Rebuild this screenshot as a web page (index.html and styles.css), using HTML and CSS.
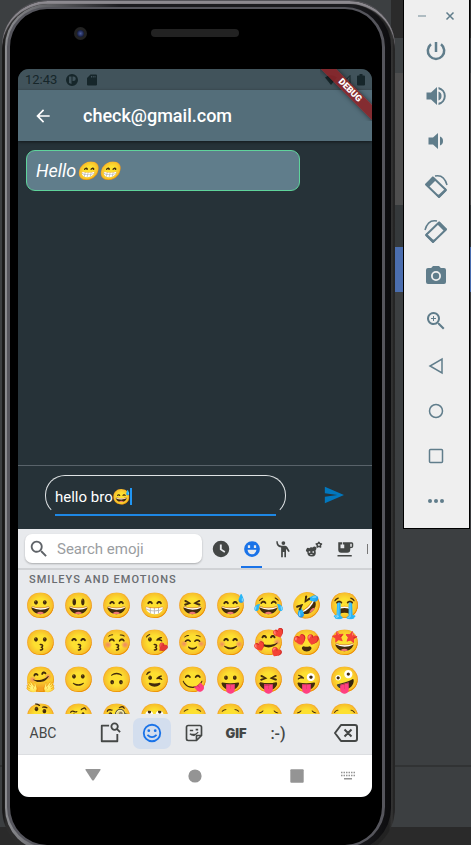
FILE: index.html
```
<!DOCTYPE html>
<html lang="en">
<head>
<meta charset="utf-8">
<meta name="viewport" content="width=device-width, initial-scale=1">
<title>Chat</title>
<link rel="stylesheet" href="styles.css">
</head>
<body>
<main class="desk">
  <div class="phone">
    <div class="rim">
      <div class="bezel">
        <div class="bezel-top"><span class="camera"></span><span class="speaker"></span></div>
        <div class="screen">
          <div class="statusbar">
            <span class="clock">12:43</span>
            <svg class="i12" viewBox="0 0 24 24"><path fill-rule="evenodd" d="M12 0a12 12 0 1 1 0 24 12 12 0 0 1 0-24zM6 5v13l5 2V5zm7 0v9h2a4.500 4.500 0 0 0 0-9z"/></svg>
            <svg class="i12" viewBox="0 0 24 24"><path fill-rule="evenodd" d="M9 1L2 8v13q0 2 2 2h16q2 0 2-2V3q0-2-2-2zm1 3v3h2V4zm3.500 0v3h2V4zM17 4v3h2V4z"/></svg>
            <span class="grow"></span>
            <div class="signals">
              <svg class="i12" viewBox="0 0 24 24"><path d="M0 7q12-9 24 0L12 22z"/></svg>
              <svg class="i12" viewBox="0 0 24 24"><path class="line" d="M20 3v17H4z"/></svg>
              <svg class="i12" viewBox="0 0 24 24"><path d="M9 0h6v3h3q2 0 2 2v16q0 2-2 2H6q-2 0-2-2V5q0-2 2-2h3z"/></svg>
            </div>
          </div>
          <header class="appbar">
            <button class="plain back" aria-label="Back"><svg class="i20" viewBox="0 0 24 24"><path d="M20 11H7.830l5.590-5.590L12 4l-8 8 8 8 1.410-1.410L7.830 13H20z"/></svg></button>
            <h1>check@gmail.com</h1>
          </header>
          <section class="messages"><p class="bubble">Hello😁😁</p></section>
          <form class="composer">
            <div class="field"><label class="entry"><input class="message" size="8" aria-label="Message" value="hello bro😅"><span class="caret"></span></label></div>
            <button type="button" class="plain send" aria-label="Send"><svg class="i20" viewBox="0 0 24 24"><path d="M1 22l23-10L1 2v8l15 2-15 2z"/></svg></button>
          </form>
          <section class="keyboard">
            <div class="searchrow">
              <label class="search">
                <svg class="i22" viewBox="0 0 24 24"><path d="M15.500 14h-.790l-.280-.270A6.500 6.500 0 1 0 13.730 14.430l.270.280v.790l5 5L20.500 19zm-6 0a4.500 4.500 0 1 1 0-9 4.500 4.500 0 0 1 0 9z"/></svg>
                <input placeholder="Search emoji" aria-label="Search emoji">
              </label>
              <nav class="cats">
                <button class="plain" aria-label="Recent"><svg class="i18" viewBox="0 0 24 24"><path fill-rule="evenodd" d="M12 1a11 11 0 1 1 0 22 11 11 0 0 1 0-22zM10.500 6v7l6 4 1.200-2-4.700-3V6z"/></svg></button>
                <button class="plain on" aria-label="Smileys"><svg class="i18" viewBox="0 0 24 24"><path fill-rule="evenodd" d="M12 1.500a10.500 10.500 0 1 1 0 21 10.500 10.500 0 0 1 0-21zM6.500 7v3.500h3V7zm8 0v3.500h3V7zM6 13q1 6 6 6t6-6z"/></svg></button>
                <button class="plain" aria-label="People"><svg class="i18" viewBox="0 0 24 24"><circle cx="12.500" cy="4" r="2.500"/><path d="M3 1.500h2q0 5.500 5 6h5q2 0 3 2l3 5.500-1.700 1-3.300-4.500V23h-2.200v-7h-2v7H9.500V10Q3 9 3 1.500z"/></svg></button>
                <button class="plain" aria-label="Animals and nature"><svg class="i18" viewBox="0 0 24 24"><path fill-rule="evenodd" d="M2 12q1-3 4-1 1-2 4-1 3-3 5 0 1 2-1 4 2 8-5 8-6 0-6-6-3-1-1-4zm3 3v2h2v-2zm5 0v2h2v-2zM7 19v1h3v-1z"/><path class="line" d="M18.500 3l1.200 1.800 2.300.400-1.500 1.800.300 2.500-2.300-1-2.300 1 .300-2.500L15 5.200l2.300-.400z"/></svg></button>
                <button class="plain" aria-label="Food and drink"><svg class="i18" viewBox="0 0 24 24"><path fill-rule="evenodd" d="M3 3h18q2 0 2 2v3q0 3-4 3v2q0 4-4 4H7q-4 0-4-4zm5 0v3H6v5h5V6H9V3zm11 2v4h2V5zM2 20h19v2H2z"/></svg></button>
                <span class="more-cats"></span>
              </nav>
            </div>
            <h2>SMILEYS AND EMOTIONS</h2>
            <div class="emojis">
              <span>😀</span><span>😃</span><span>😄</span><span>😁</span><span>😆</span><span>😅</span><span>😂</span><span>🤣</span><span>😭</span>
              <span>😗</span><span>😙</span><span>😚</span><span>😘</span><span>☺️</span><span>😊</span><span>🥰</span><span>😍</span><span>🤩</span>
              <span>🤗</span><span>🙂</span><span>🙃</span><span>😉</span><span>😋</span><span>😛</span><span>😝</span><span>😜</span><span>🤪</span>
              <span>🤔</span><span>🤨</span><span>🧐</span><span>🙄</span><span>😌</span><span>😌</span><span>😔</span><span>😔</span><span>😪</span>
            </div>
            <div class="modes">
              <button class="plain abc">ABC</button>
              <button class="plain" aria-label="Search media"><svg class="i22" viewBox="0 0 24 24"><path class="line" d="M11 4H3v17h17v-8"/><circle class="line" cx="17" cy="5" r="3.500"/><path class="line" d="M19.500 7.500L23 11"/></svg></button>
              <button class="plain chosen" aria-label="Emoji"><svg class="i22" viewBox="0 0 24 24"><circle class="line" cx="12" cy="12" r="9"/><path class="line" d="M7 14q5 5 10 0"/><circle cx="8.500" cy="9.500" r="1.500"/><circle cx="15.500" cy="9.500" r="1.500"/></svg></button>
              <button class="plain" aria-label="Stickers"><svg class="i20" viewBox="0 0 24 24"><path class="line" d="M5 3h14q2 0 2 2v10l-6 6H5q-2 0-2-2V5q0-2 2-2zM21 15h-6v6"/><path class="thin" d="M7 13q5 4 10-2"/><path d="M7 8h4v2H7zM14 7h3v2h-3zM8 13h7l-3 3z"/></svg></button>
              <button class="plain gif">GIF</button>
              <button class="plain kaomoji">:-)</button>
              <button class="plain" aria-label="Delete"><svg class="i24" viewBox="0 0 24 24"><path class="line" d="M7 4h14q2 0 2 2v12q0 2-2 2H7L1 12zM10.500 8.500l7 7m0-7l-7 7"/></svg></button>
            </div>
          </section>
          <nav class="sysnav">
            <button class="plain" aria-label="Hide keyboard"><svg class="i18" viewBox="0 0 18 18"><path d="M2 2h14q1 0 .500 1L10 13q-1 1-2 0L1.500 3Q1 2 2 2z"/></svg></button>
            <button class="plain" aria-label="Home"><svg class="i18" viewBox="0 0 18 18"><circle cx="9" cy="9" r="6.600"/></svg></button>
            <button class="plain" aria-label="Overview"><svg class="i18" viewBox="0 0 18 18"><rect x="2.300" y="2.300" width="13.400" height="13.400" rx="1"/></svg></button>
            <button class="plain" aria-label="Choose keyboard"><svg class="i18" viewBox="0 0 18 18"><path class="keys" d="M2 5.500h15M2 8.500h15"/><path d="M5 11h8v1.500H5z"/></svg></button>
          </nav>
          <div class="ribbon-box"><span class="ribbon">DEBUG</span></div>
        </div>
      </div>
    </div>
  </div>
  <aside class="tools">
    <div class="window">
      <button class="plain" aria-label="Minimize"><svg class="i12" viewBox="0 0 12 12"><path class="thin faint" d="M2 6h8"/></svg></button>
      <button class="plain" aria-label="Close"><svg class="i12" viewBox="0 0 12 12"><path class="thin" d="M2.500 2.500l7 7m0-7l-7 7"/></svg></button>
    </div>
    <button class="plain" aria-label="Power"><svg class="i24" viewBox="0 0 24 24"><path class="bold" d="M12 3v10M7 5.200a8.200 8.200 0 1 0 10 0"/></svg></button>
    <button class="plain" aria-label="Volume up"><svg class="i24" viewBox="0 0 24 24"><path d="M2.500 8.500v7h4.500l6 5.500V3L7 8.500zM17.500 12A4.500 4.500 0 0 0 14.500 7.500v9A4.500 4.500 0 0 0 17.500 12zM14.500 3v2.200a7 7 0 0 1 0 13.600V21a9.200 9.200 0 0 0 0-18z"/></svg></button>
    <button class="plain" aria-label="Volume down"><svg class="i24" viewBox="0 0 24 24"><path d="M19 12A4.500 4.500 0 0 0 16 7.500v9A4.480 4.480 0 0 0 19 12zM4.500 8.500v7H9l5 4.500V4L9 8.500z"/></svg></button>
    <button class="plain" aria-label="Rotate left"><svg class="i24" viewBox="0 0 24 24"><g class="thick"><path d="M9 3.500L22 16l-7 7L2 10.500z"/><path class="thin" d="M11 2q9-2 12 9"/></g><path d="M8.500 2.500L12 6l-7 7-3-2zM22 14v3l-7 7-3-3 3-.500z"/></svg></button>
    <button class="plain" aria-label="Rotate right"><svg class="i24" viewBox="0 0 24 24"><g class="thick" transform="matrix(-1 0 0 1 24 0)"><path d="M9 3.500L22 16l-7 7L2 10.500z"/><path class="thin" d="M11 2q9-2 12 9"/></g><path d="M15.500 2.500L13 5l7 7 3-2zM2 14v3l7 7 3-3-3-.500z"/></svg></button>
    <button class="plain" aria-label="Screenshot"><svg class="i24" viewBox="0 0 24 24"><circle cx="12" cy="12" r="3.200"/><path d="M9 2L7.170 4H4a2 2 0 0 0-2 2v12a2 2 0 0 0 2 2h16a2 2 0 0 0 2-2V6a2 2 0 0 0-2-2h-3.170L15 2zm3 15a5 5 0 1 1 0-10 5 5 0 0 1 0 10z"/></svg></button>
    <button class="plain" aria-label="Zoom"><svg class="i24" viewBox="0 0 24 24"><path d="M15.500 14h-.790l-.280-.270A6.500 6.500 0 1 0 13.730 14.430l.270.280v.790l5 5L20.500 19zm-6 0a4.500 4.500 0 1 1 0-9 4.500 4.500 0 0 1 0 9zM9 7h1v2h2v1h-2v2H9v-2H7V9h2z"/></svg></button>
    <button class="plain" aria-label="Back key"><svg class="i24" viewBox="0 0 24 24"><path class="thin" d="M18 5v14L6 12z"/></svg></button>
    <button class="plain" aria-label="Home key"><svg class="i24" viewBox="0 0 24 24"><circle class="thin" cx="12" cy="12" r="6.500"/></svg></button>
    <button class="plain" aria-label="Overview key"><svg class="i24" viewBox="0 0 24 24"><rect class="thin" x="5.500" y="5.500" width="13" height="13" rx="1"/></svg></button>
    <button class="plain" aria-label="More"><svg class="i24" viewBox="0 0 24 24"><circle cx="6" cy="12" r="2"/><circle cx="12" cy="12" r="2"/><circle cx="18" cy="12" r="2"/></svg></button>
  </aside>
</main>
</body>
</html>
```
FILE: styles.css
```
* { box-sizing: border-box; }
body {
  margin: 0;
  font-family: Roboto, "Noto Color Emoji", sans-serif;
  color: #fff;
}
svg { display: block; fill: currentColor; flex: none; overflow: visible; }
.line { fill: none; stroke: currentColor; stroke-width: 2; stroke-linejoin: round; }
.thin { fill: none; stroke: currentColor; stroke-width: 1.5; }
.thick { fill: none; stroke: currentColor; stroke-width: 2; stroke-linejoin: round; }
.bold { fill: none; stroke: currentColor; stroke-width: 2.5; }
.faint { opacity: .6; }
.i12 { width: 12px; height: 12px; }
.i18 { width: 18px; height: 18px; }
.i20 { width: 20px; height: 20px; }
.i22 { width: 22px; height: 22px; }
.i24 { width: 24px; height: 24px; }
.grow { flex: 1; }
.plain {
  display: flex;
  align-items: center;
  justify-content: center;
  padding: 0;
  border: 0;
  background: none;
  color: inherit;
  font: inherit;
}

.desk {
  display: flex;
  align-items: flex-start;
  gap: 8px;
  height: 100vh;
  padding: 0 1px 0 2px;
  overflow: hidden;
  background:
    linear-gradient(#2b2b2b 38px, #3e4244 38px 73px, #4e4e4e 73px 205px, #35393b 205px 247px, #4b6eaf 247px 292px, transparent 292px) right / 80px 100% no-repeat,
    linear-gradient(#3c3f41 765px, #313334 765px 767px, #3c3f41 767px 827px, #2a2a2a 827px);
}

/* handset */
.phone {
  flex: 1;
  min-width: 0;
  padding: 3px 4px 4px 3px;
  border-radius: 46px;
  border-top: 1px solid #55545a;
  background: linear-gradient(90deg, #0c0c0c, #2c2c2c 4px, #222 calc(100% - 6px), #353535 calc(100% - 3px), #151515);
  box-shadow: inset 0 3px 1px #8d8a90;
}
.rim {
  padding: 3px 6px 4px 2px;
  border-radius: 43px;
  background: linear-gradient(90deg, #8b8c90, #1b1b1f 30%, #1b1b1f 90%, #0c0c0e);
}
.bezel {
  padding: 0 10px 48px 8px;
  border: 2px solid #55555c;
  border-left-width: 3px;
  border-right-width: 3px;
  border-radius: 40px;
  background: #000;
}
.bezel-top {
  display: grid;
  grid-template-columns: 1fr 88px 1fr;
  align-items: center;
  height: 60px;
  padding-bottom: 12px;
}
.camera {
  width: 13px;
  height: 13px;
  margin-left: 56px;
  border: 3px solid #222;
  border-radius: 50%;
  background: radial-gradient(circle, #4a5a9a, #141c40 70%);
}
.speaker { height: 8px; border-radius: 4px; background: #222; }

.screen {
  position: relative;
  overflow: hidden;
  border-radius: 11px;
  background: #263238;
}
.statusbar {
  display: flex;
  align-items: center;
  gap: 8px;
  height: 21px;
  padding: 0 5px 0 7px;
  background: #41535b;
  color: #16262a;
}
.clock { margin-right: 1px; font-size: 13px; }
.signals { display: flex; gap: 3px; }
.appbar {
  display: flex;
  align-items: center;
  gap: 30px;
  height: 51px;
  padding-left: 15px;
  background: #546e7a;
  box-shadow: 0 1px 3px #0008;
}
h1 { margin: 0; font-size: 18px; font-weight: 500; }
.ribbon-box {
  position: absolute;
  top: 0;
  right: 0;
  width: 52px;
  height: 52px;
  overflow: hidden;
}
.ribbon {
  position: absolute;
  top: 16px;
  left: -10px;
  width: 80px;
  background: #8a2529e6;
  box-shadow: 0 0 5px #0008;
  font-size: 9px;
  font-weight: 900;
  line-height: 11px;
  text-align: center;
  transform: rotate(45deg);
}
.messages { min-height: 324px; padding: 9px 72px 0 8px; }
.bubble {
  margin: 0;
  padding: 0 9px;
  border: 1px solid #5fd39b;
  border-radius: 9px;
  background: #607d8b;
  font-size: 18px;
  font-style: italic;
  line-height: 39px;
}

.composer {
  display: flex;
  align-items: center;
  gap: 38px;
  height: 64px;
  padding: 0 28px 5px 27px;
  border-top: 1px solid #59636a;
}
.field {
  flex: 1;
  min-width: 0;
  height: 41px;
  padding: 0 9px;
  border: 1px solid #dfe3e5;
  border-bottom-color: transparent;
  border-radius: 20px;
}
.entry {
  display: flex;
  align-items: center;
  height: 40px;
  padding-top: 4px;
  border-bottom: 2px solid #1e88e5;
}
input {
  min-width: 0;
  padding: 0;
  border: 0;
  outline: 0;
  background: none;
  color: inherit;
  font: inherit;
}
.message { width: 75px; font-size: 15px; }
.caret { width: 2px; height: 17px; background: #2196f3; }
.send { color: #0277bd; }

/* emoji keyboard */
.keyboard { background: #e8eaed; color: #444746; }
.searchrow {
  display: flex;
  align-items: center;
  height: 41px;
  padding-left: 7px;
  border-bottom: 2px solid #d0d2d5;
}
.search {
  display: flex;
  flex: 1;
  align-items: center;
  gap: 7px;
  min-width: 0;
  height: 29px;
  padding-left: 3px;
  border-radius: 7px;
  background: #fff;
  box-shadow: 0 1px 2px #0004;
  color: #5f6368;
  font-size: 15px;
}
.search input { flex: 1; }
.search input::placeholder { color: #9a9da1; }
.cats { display: flex; align-items: center; margin-left: 3px; padding-right: 4px; }
.cats .plain { width: 31px; height: 39px; }
.cats .on {
  background: linear-gradient(#1a73e8, #1a73e8) bottom / 21px 2px no-repeat;
  color: #1a73e8;
}
.more-cats { width: 8px; height: 10px; border-right: 1px solid #777; }
h2 {
  margin: 0;
  padding: 3px 11px 0;
  color: #6a6d71;
  font-size: 11px;
  font-weight: 500;
  letter-spacing: 1px;
  line-height: 14px;
}
.emojis {
  display: grid;
  grid-template-columns: repeat(9, 1fr);
  grid-auto-rows: 37px;
  height: 127px;
  padding: 0 8px 0 4px;
  overflow: hidden;
  font-family: "Noto Color Emoji", sans-serif;
  font-size: 25px;
  line-height: 37px;
}
.emojis span { display: flex; justify-content: center; min-width: 0; }
.modes {
  display: grid;
  grid-template-columns: 50px 21px repeat(5, 42px) 1fr 52px;
  align-items: center;
  height: 41px;
  padding-bottom: 2px;
  border-radius: 8px 8px 0 0;
  border-bottom: 1px solid #dcdee1;
}
.modes .plain { height: 31px; }
.modes .plain:nth-child(2) { grid-column: 3; }
.modes .plain:last-child { grid-column: 9; }
.modes .chosen { margin: 0 2px; border-radius: 7px; background: #d3deee; color: #1a73e8; }
.abc { font-size: 14px; }
.gif { font-family: Inter, sans-serif; font-size: 13px; font-weight: 900; }
.kaomoji { font-size: 16px; font-weight: 500; }
.sysnav {
  display: grid;
  grid-template-columns: 102fr 102fr 102fr 48fr;
  height: 42px;
  background: #fff;
  color: #949494;
}
.sysnav .plain:nth-child(-n+3) { padding-left: 48px; }
.keys { stroke: currentColor; stroke-width: 1.5; stroke-dasharray: 1.500 1; }

/* emulator toolbar */
.tools {
  display: grid;
  grid-template-rows: 28px;
  grid-auto-rows: 45px;
  flex: none;
  width: 67px;
  padding: 0 1px 5px 0;
  border: 1px solid #000;
  border-top: 0;
  background: #efefef;
  color: #607d8b;
}
.window { display: flex; align-items: center; justify-content: center; gap: 16px; padding-top: 4px; }
```
